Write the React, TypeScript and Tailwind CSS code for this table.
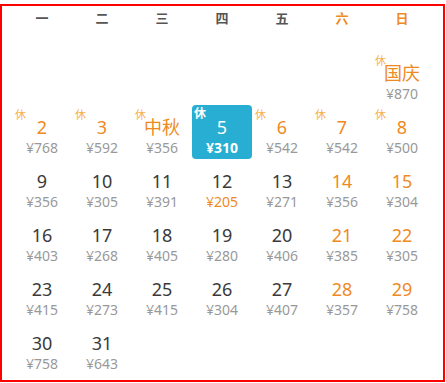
import React from "react";

type Day = {
  label: string;
  price: string;
  rest?: boolean;
  orange?: boolean;
  cheap?: boolean;
  selected?: boolean;
};

const weekdays = ["一", "二", "三", "四", "五", "六", "日"];

const weeks: (Day | null)[][] = [
  [null, null, null, null, null, null, { label: "国庆", price: "870", rest: true, orange: true }],
  [
    { label: "2", price: "768", rest: true, orange: true },
    { label: "3", price: "592", rest: true, orange: true },
    { label: "中秋", price: "356", rest: true, orange: true },
    { label: "5", price: "310", rest: true, selected: true },
    { label: "6", price: "542", rest: true, orange: true },
    { label: "7", price: "542", rest: true, orange: true },
    { label: "8", price: "500", rest: true, orange: true },
  ],
  [
    { label: "9", price: "356" },
    { label: "10", price: "305" },
    { label: "11", price: "391" },
    { label: "12", price: "205", cheap: true },
    { label: "13", price: "271" },
    { label: "14", price: "356", orange: true },
    { label: "15", price: "304", orange: true },
  ],
  [
    { label: "16", price: "403" },
    { label: "17", price: "268" },
    { label: "18", price: "405" },
    { label: "19", price: "280" },
    { label: "20", price: "406" },
    { label: "21", price: "385", orange: true },
    { label: "22", price: "305", orange: true },
  ],
  [
    { label: "23", price: "415" },
    { label: "24", price: "273" },
    { label: "25", price: "415" },
    { label: "26", price: "304" },
    { label: "27", price: "407" },
    { label: "28", price: "357", orange: true },
    { label: "29", price: "758", orange: true },
  ],
  [{ label: "30", price: "758" }, { label: "31", price: "643" }, null, null, null, null, null],
];

function DayCell({ day }: { day: Day | null }) {
  if (!day) return <div className="h-[54px]" />;

  if (day.selected) {
    return (
      <div className="relative h-[54px] rounded-[4px] bg-[#27aed2] flex flex-col items-center pt-[12px] text-white">
        {day.rest && (
          <span className="absolute left-[2px] top-[2px] text-[12px] leading-[14px] font-bold">休</span>
        )}
        <span className="text-[18px] leading-[20px]">{day.label}</span>
        <span className="mt-[3px] text-[14px] leading-[16px] font-bold">¥{day.price}</span>
      </div>
    );
  }

  return (
    <div className="relative h-[54px] flex flex-col items-center pt-[12px]">
      {day.rest && (
        <span className="absolute left-[3px] top-[4px] text-[11px] leading-[12px] text-[#f7b04a]">休</span>
      )}
      <span
        className={`text-[18px] leading-[20px] ${day.orange ? "text-[#ef8a22]" : "text-[#3a3a3a]"}`}
      >
        {day.label}
      </span>
      <span
        className={`mt-[3px] text-[14px] leading-[16px] ${day.cheap ? "text-[#ef8a22]" : "text-[#999999]"}`}
      >
        ¥{day.price}
      </span>
    </div>
  );
}

export default function App() {
  return (
    <div className="w-[446px] h-[383px] bg-white pt-[4px] font-['Noto_Sans','Noto_Sans_CJK_SC',sans-serif]">
      <div className="w-[445px] h-[378px] border-2 border-[#ff0000] pl-[10px]">
        {/* week header */}
        <div className="grid grid-cols-7 w-[420px] h-[45px]">
          {weekdays.map((w, i) => (
            <div
              key={w}
              className={`text-center text-[13px] leading-[24px] font-bold ${i >= 5 ? "text-[#ef8a22]" : "text-[#555555]"}`}
            >
              {w}
            </div>
          ))}
        </div>

        {/* days */}
        <div className="grid grid-cols-7 w-[420px]">
          {weeks.flat().map((d, i) => (
            <DayCell key={i} day={d} />
          ))}
        </div>
      </div>
    </div>
  );
}
